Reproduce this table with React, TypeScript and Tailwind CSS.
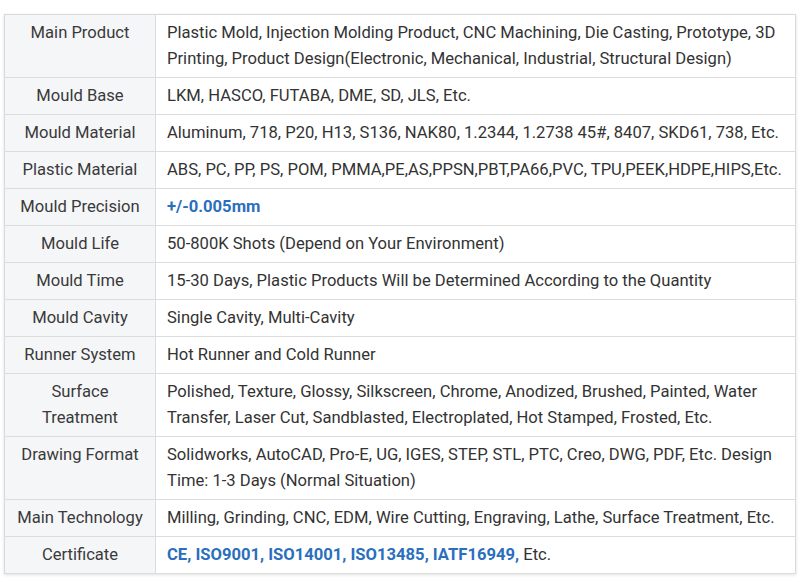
const rows: { label: string; value: React.ReactNode }[] = [
  {
    label: "Main Product",
    value:
      "Plastic Mold, Injection Molding Product, CNC Machining, Die Casting, Prototype, 3D Printing, Product Design(Electronic, Mechanical, Industrial, Structural Design)",
  },
  { label: "Mould Base", value: "LKM, HASCO, FUTABA, DME, SD, JLS, Etc." },
  {
    label: "Mould Material",
    value: "Aluminum, 718, P20, H13, S136, NAK80, 1.2344, 1.2738 45#, 8407, SKD61, 738, Etc.",
  },
  {
    label: "Plastic Material",
    value: "ABS, PC, PP, PS, POM, PMMA,PE,AS,PPSN,PBT,PA66,PVC, TPU,PEEK,HDPE,HIPS,Etc.",
  },
  {
    label: "Mould Precision",
    value: <span className="font-bold text-[#2a6fbd]">+/-0.005mm</span>,
  },
  { label: "Mould Life", value: "50-800K Shots (Depend on Your Environment)" },
  {
    label: "Mould Time",
    value: "15-30 Days, Plastic Products Will be Determined According to the Quantity",
  },
  { label: "Mould Cavity", value: "Single Cavity, Multi-Cavity" },
  { label: "Runner System", value: "Hot Runner and Cold Runner" },
  {
    label: "Surface Treatment",
    value:
      "Polished, Texture, Glossy, Silkscreen, Chrome, Anodized, Brushed, Painted, Water Transfer, Laser Cut, Sandblasted, Electroplated, Hot Stamped, Frosted, Etc.",
  },
  {
    label: "Drawing Format",
    value:
      "Solidworks, AutoCAD, Pro-E, UG, IGES, STEP, STL, PTC, Creo, DWG, PDF, Etc. Design Time: 1-3 Days (Normal Situation)",
  },
  {
    label: "Main Technology",
    value: "Milling, Grinding, CNC, EDM, Wire Cutting, Engraving, Lathe, Surface Treatment, Etc.",
  },
  {
    label: "Certificate",
    value: (
      <>
        <span className="font-bold text-[#2a6fbd]">CE, ISO9001, ISO14001, ISO13485, IATF16949,</span> Etc.
      </>
    ),
  },
];

export default function App() {
  return (
    <div className="min-h-[587px] bg-white px-1 pt-[14px] font-['Roboto',sans-serif] text-[16.6px] leading-[26px] text-[#333]">
      <table className="w-[792px] border-collapse border border-[#d9d9d9] shadow-[0_1px_3px_rgba(0,0,0,0.12)]">
        <tbody>
          {rows.map((r) => (
            <tr key={r.label} className="border-b border-[#dcdcdc]">
              <td className="w-[151px] border-r border-[#dcdcdc] bg-[#f5f6f8] px-3 py-[5px] text-center align-top text-[#3a3a3a]">
                {r.label}
              </td>
              <td className="py-[5px] pl-[11px] pr-3 align-top">{r.value}</td>
            </tr>
          ))}
        </tbody>
      </table>
    </div>
  );
}
